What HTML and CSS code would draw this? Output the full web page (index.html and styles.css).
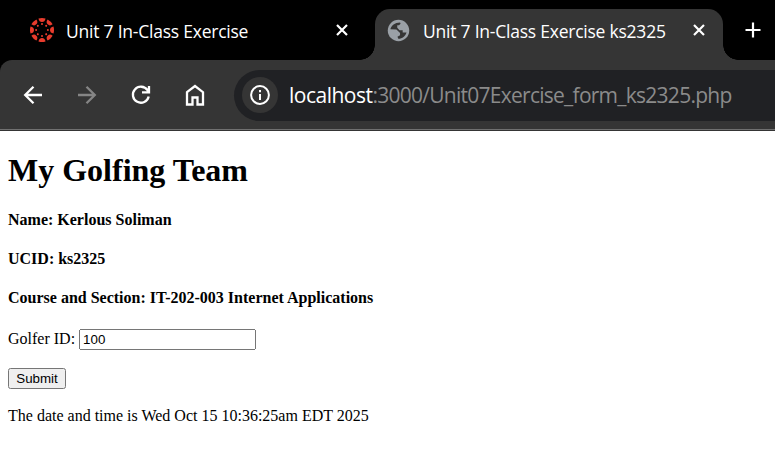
FILE: index.html
```html
<!DOCTYPE html>
<html lang="en">
<head>
<meta charset="utf-8">
<title>Unit 7 In-Class Exercise ks2325</title>
<link rel="stylesheet" href="styles.css">
</head>
<body>
<header class="browser">
  <div class="tabs">
    <div class="tab">
      <svg class="favicon" viewBox="-12 -12 24 24" width="24" height="24">
        <defs><g id="petal"><path d="M-3.500-11.500Q0-12.500 3.500-11.500Q3-8 0-8Q-3-8-3.500-11.500Z"/><circle cy="-5.900" r="1"/></g></defs>
        <g fill="#e83c2d">
          <use href="#petal"/><use href="#petal" transform="rotate(45)"/><use href="#petal" transform="rotate(90)"/><use href="#petal" transform="rotate(135)"/><use href="#petal" transform="rotate(180)"/><use href="#petal" transform="rotate(225)"/><use href="#petal" transform="rotate(270)"/><use href="#petal" transform="rotate(315)"/>
        </g>
      </svg>
      <span class="tab-title">Unit 7 In-Class Exercise</span>
      <svg class="close" viewBox="0 0 12 12" width="12" height="12"><path d="M1 1l10 10M11 1L1 11"/></svg>
    </div>
    <div class="tab active">
      <svg class="favicon" viewBox="0 0 24 24" width="25" height="25"><circle cx="12" cy="12" r="10.300" fill="#9aa0a6"/><path fill="#353535" d="M4.200 10.800C5 7 8.500 4.200 13.500 4.200L14 5.500L12.500 7H10.800V9.300L13 11.800H16V13.800H19.700C18.700 17.300 15.800 19.800 11.800 19.900L11 18L13.500 16.500V14.500L10 11Z"/></svg>
      <span class="tab-title">Unit 7 In-Class Exercise ks2325</span>
      <svg class="close" viewBox="0 0 12 12" width="12" height="12"><path d="M1 1l10 10M11 1L1 11"/></svg>
    </div>
    <svg class="new-tab" viewBox="0 0 16 16" width="16" height="16"><path d="M8 .5v15M.5 8h15"/></svg>
  </div>
  <div class="toolbar">
    <nav class="controls">
      <svg viewBox="0 0 24 24" width="24" height="24"><path d="M21 12H4.500M12.500 3.700L4.200 12l8.300 8.300"/></svg>
      <svg class="disabled" viewBox="0 0 24 24" width="24" height="24"><path d="M3 12h16.500M11.500 3.700l8.300 8.300-8.300 8.300"/></svg>
      <svg viewBox="0 0 24 24" width="24" height="24"><path d="M19.700 13.500A8 8 0 1 1 18.500 7.200L19.800 8.700M20 3v6.300h-7"/></svg>
      <svg viewBox="0 0 24 24" width="24" height="24"><path d="M4 9.200L12 3l8 6.200V21.500h-5.500v-7h-5v7H4z"/></svg>
    </nav>
    <div class="address">
      <span class="info"><svg viewBox="0 0 20 20" width="20" height="20"><circle cx="10" cy="10" r="8.900"/><path d="M10 9v6M10 5v2.200"/></svg></span>
      <span class="url"><b>localhost</b><span>:3000/Unit07Exercise_form_ks2325.php</span></span>
    </div>
  </div>
</header>
<main>
  <h1>My Golfing Team</h1>
  <h4>Name: Kerlous Soliman</h4>
  <h4>UCID: ks2325</h4>
  <h4>Course and Section: IT-202-003 Internet Applications</h4>
  <form>
    <label for="golfer">Golfer ID:</label>
    <input id="golfer" type="text" value="100"><br><br>
    <input class="submit" type="submit" value="Submit">
  </form>
  <p>The date and time is Wed Oct 15 10:36:25am EDT 2025</p>
</main>
</body>
</html>
```
FILE: styles.css
```css
body { margin: 0; background: #fff; color: #000; font-family: "Liberation Serif", serif; overflow: hidden; }
svg { display: block; flex: none; }
.browser { height: 131px; background: #000; font-family: "Open Sans", sans-serif; }
.tabs { height: 60px; box-sizing: border-box; padding-top: 9px; display: flex; }
.tab { position: relative; display: flex; align-items: center; box-sizing: border-box; height: 51px; width: 375px; padding: 0 27px 9px 30px; color: #fff; }
.tab.active { width: 348px; padding: 0 18px 9px 11px; background: #353535; border-radius: 15px 15px 0 0; }
.tab.active::before, .tab.active::after { content: ""; position: absolute; bottom: 0; width: 15px; height: 15px; }
.tab.active::before { left: -15px; background: radial-gradient(circle at 0 0, transparent 14.5px, #353535 15px); }
.tab.active::after { right: -15px; background: radial-gradient(circle at 100% 0, transparent 14.5px, #353535 15px); }
.tab-title { flex: 1; margin: 2px 0 0 12px; font-size: 17.5px; line-height: 24px; letter-spacing: -.23px; white-space: nowrap; }
.close { fill: none; stroke: #fff; stroke-width: 2.2; }
.new-tab { margin: 13px 0 0 22px; fill: none; stroke: #fff; stroke-width: 2.2; }
.toolbar { height: 71px; box-sizing: border-box; display: flex; align-items: center; background: #353535; border-radius: 12px 0 0 0; border-bottom: 1px solid #353535; box-shadow: inset 0 -1px #707070; }
.controls { display: flex; gap: 30px; margin-left: 21px; }
.controls svg { fill: none; stroke: #fff; stroke-width: 2.3; }
.controls .disabled { stroke: #858585; }
.address { flex: 1; display: flex; align-items: center; box-sizing: border-box; height: 51px; margin-left: 27px; padding-left: 8px; background: #202124; border-radius: 26px 0 0 26px; }
.info { display: grid; place-items: center; flex: none; width: 36px; height: 36px; border-radius: 50%; background: #353535; }
.info svg { fill: none; stroke: #fff; stroke-width: 2; }
.url { margin-left: 11px; font-size: 21px; letter-spacing: -.74px; white-space: nowrap; color: #8b8b8b; }
.url b { font-weight: 400; letter-spacing: -.5px; color: #fff; }
main { display: flow-root; margin: 0 8px; }
input { font-family: "Liberation Sans", Arial, sans-serif; }
#golfer { width: 177px; height: 21px; box-sizing: border-box; }
.submit { width: 58px; height: 21px; padding: 1px 0; }
p { margin: 18px 0; }
```
